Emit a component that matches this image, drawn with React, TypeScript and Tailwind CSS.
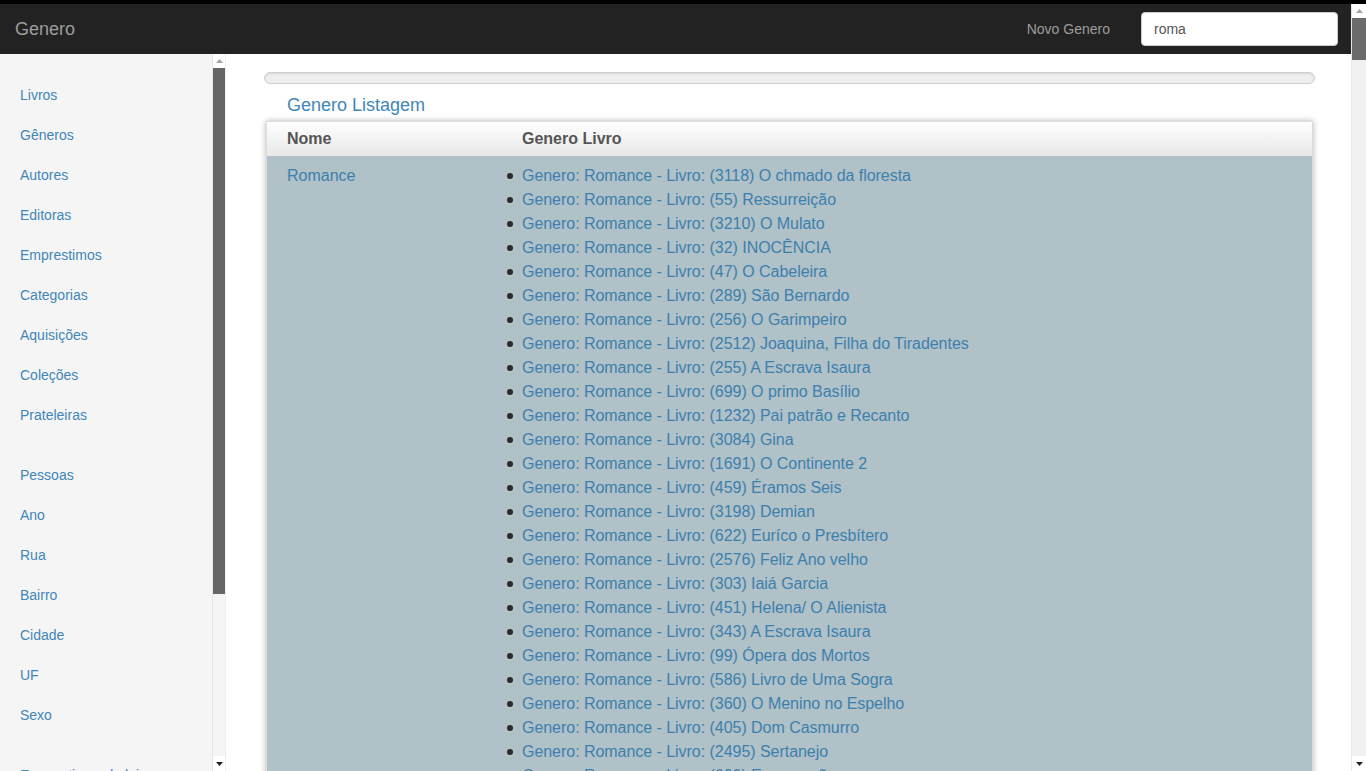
import React from "react";

const sideA = ["Livros", "Gêneros", "Autores", "Editoras", "Emprestimos", "Categorias", "Aquisições", "Coleções", "Prateleiras"];
const sideB = ["Pessoas", "Ano", "Rua", "Bairro", "Cidade", "UF", "Sexo"];
const sideC = ["Emprestimos da loja", "Devoluções"];

const livros = [
  "(3118) O chmado da floresta",
  "(55) Ressurreição",
  "(3210) O Mulato",
  "(32) INOCÊNCIA",
  "(47) O Cabeleira",
  "(289) São Bernardo",
  "(256) O Garimpeiro",
  "(2512) Joaquina, Filha do Tiradentes",
  "(255) A Escrava Isaura",
  "(699) O primo Basílio",
  "(1232) Pai patrão e Recanto",
  "(3084) Gina",
  "(1691) O Continente 2",
  "(459) Éramos Seis",
  "(3198) Demian",
  "(622) Euríco o Presbítero",
  "(2576) Feliz Ano velho",
  "(303) Iaiá Garcia",
  "(451) Helena/ O Alienista",
  "(343) A Escrava Isaura",
  "(99) Ópera dos Mortos",
  "(586) Livro de Uma Sogra",
  "(360) O Menino no Espelho",
  "(405) Dom Casmurro",
  "(2495) Sertanejo",
  "(690) Encarnação",
  "(712) Senhora",
];

function ArrowUp({ color }: { color: string }) {
  return (
    <svg width="7" height="4" viewBox="0 0 7 4">
      <polygon points="0,4 7,4 3.5,0" fill={color} />
    </svg>
  );
}
function ArrowDown({ color }: { color: string }) {
  return (
    <svg width="7" height="4" viewBox="0 0 7 4">
      <polygon points="0,0 7,0 3.5,4" fill={color} />
    </svg>
  );
}

function SideItem({ s }: { s: string }) {
  return (
    <div className="h-[40px] flex items-center pl-[20px] text-[14px] text-[#4186b8] whitespace-nowrap">{s}</div>
  );
}

export default function App() {
  return (
    <div
      className="w-[1366px] h-[771px] overflow-hidden flex flex-col bg-white"
      style={{ fontFamily: '"Liberation Sans", Arial, sans-serif' }}
    >
      <div className="h-[4px] bg-black shrink-0" />
      <div className="flex flex-1 min-h-0">
        <div className="flex-1 flex flex-col min-w-0">
          {/* navbar */}
          <div className="h-[50px] shrink-0 bg-[#222222] flex items-center pl-[15px] pr-[13px]">
            <span className="text-[18px] text-[#9d9d9d]">Genero</span>
            <span className="ml-auto text-[14px] text-[#9d9d9d] mr-[31px]">Novo Genero</span>
            <div className="w-[197px] h-[34px] rounded-[4px] bg-white border border-[#ccc] flex items-center px-[12px] text-[14px] text-[#555]">
              roma
            </div>
          </div>
          <div className="flex flex-1 min-h-0">
            {/* sidebar */}
            <div className="w-[226px] shrink-0 bg-[#f5f5f5] border-r border-[#eeeeee] flex">
              <div className="flex-1 pt-[21px] overflow-hidden">
                {sideA.map((s) => (
                  <SideItem key={s} s={s} />
                ))}
                <div className="h-[20px]" />
                {sideB.map((s) => (
                  <SideItem key={s} s={s} />
                ))}
                <div className="h-[20px]" />
                {sideC.map((s) => (
                  <SideItem key={s} s={s} />
                ))}
              </div>
              <div className="w-[13px] shrink-0 bg-[#f5f5f5] border-l border-[#e6e6e6] flex flex-col">
                <div className="h-[14px] bg-white flex items-center justify-center">
                  <ArrowUp color="#a3a3a3" />
                </div>
                <div className="h-[526px] bg-[#666666]" />
                <div className="flex-1" />
                <div className="h-[15px] bg-white flex items-center justify-center">
                  <ArrowDown color="#222" />
                </div>
              </div>
            </div>
            {/* main */}
            <div className="flex-1 min-w-0 pl-[38px] pr-[36px] pt-[18px] overflow-hidden">
              <div className="h-[12px] rounded-full bg-[#eeeeee] border border-[#cfcfcf] shadow-[inset_0_1px_2px_rgba(0,0,0,0.1)]" />
              <div className="pl-[23px] mt-[11px] h-[26px] text-[18px] leading-[20px] text-[#4186b8]">Genero Listagem</div>
              <div className="mx-[2px] border border-[#dddddd] shadow-[0_0_6px_rgba(0,0,0,0.3)]">
                <div className="h-[34px] flex items-center bg-gradient-to-b from-white to-[#e8e8e8] text-[16px] font-bold text-[#555]">
                  <div className="w-[235px] pl-[20px]">Nome</div>
                  <div className="pl-[20px]">Genero Livro</div>
                </div>
                <div className="flex bg-[#b0c1c8] pt-[8px] pb-[8px]">
                  <div className="w-[235px] pl-[20px] text-[16px] leading-[24px] text-[#3c80ad]">Romance</div>
                  <ul className="pl-[20px] text-[16px] leading-[24px] tracking-[-0.04px]">
                    {livros.map((l) => (
                      <li key={l} className="relative whitespace-nowrap">
                        <span className="absolute left-[-15px] top-[9px] w-[6px] h-[6px] rounded-full bg-[#2a2a2a]" />
                        <span className="text-[#3c80ad]">Genero: Romance - Livro: {l}</span>
                      </li>
                    ))}
                  </ul>
                </div>
              </div>
            </div>
          </div>
        </div>
        {/* page scrollbar */}
        <div className="w-[15px] shrink-0 bg-[#f1f1f1] border-l border-[#e8e8e8] flex flex-col">
          <div className="h-[14px] bg-white flex items-center justify-center">
            <ArrowUp color="#a3a3a3" />
          </div>
          <div className="h-[42px] bg-[#6b6b6b]" />
          <div className="flex-1" />
          <div className="h-[15px] bg-white flex items-center justify-center">
            <ArrowDown color="#222" />
          </div>
        </div>
      </div>
    </div>
  );
}
